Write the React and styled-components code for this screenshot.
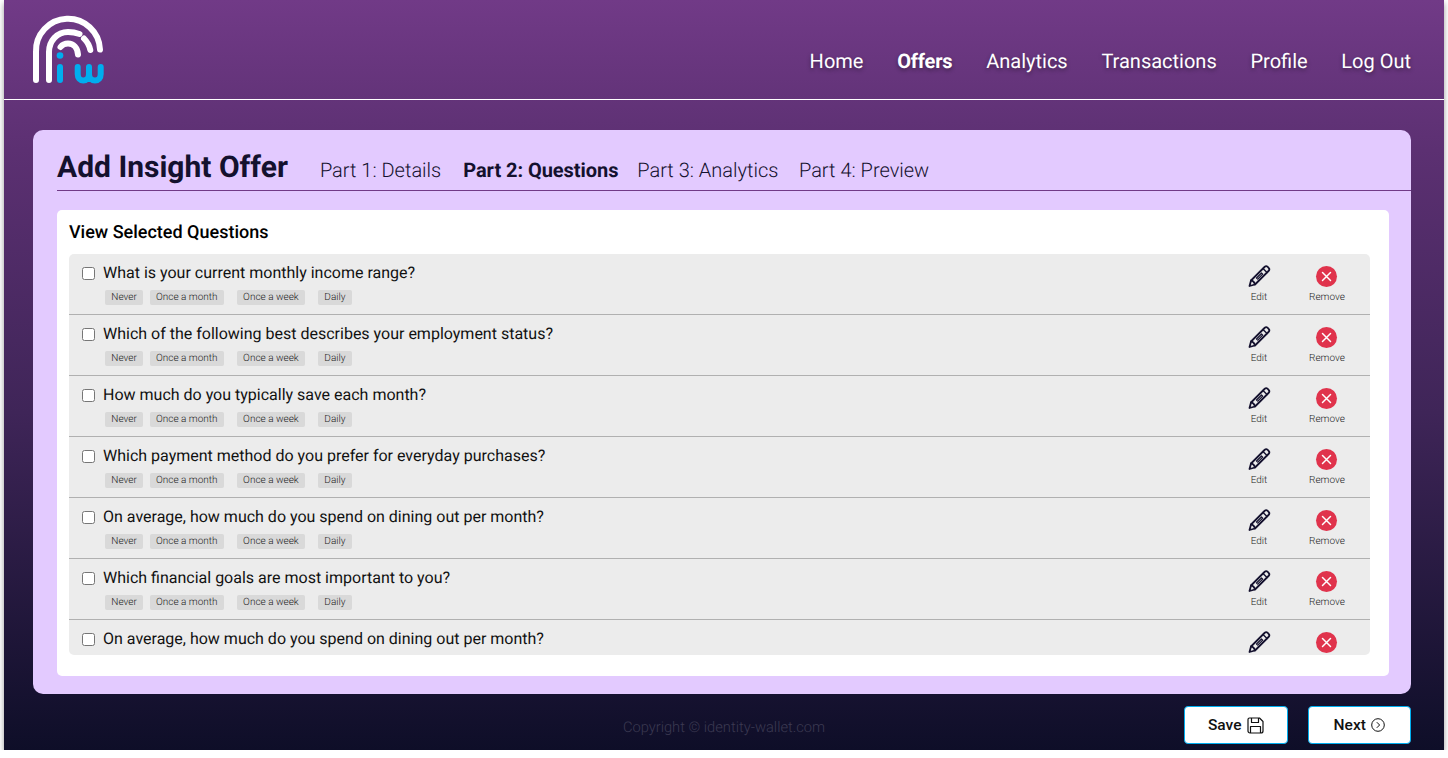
import React from "react";
import styled, { createGlobalStyle } from "styled-components";

const Global = createGlobalStyle`
  html, body { margin: 0; padding: 0; background: #fff; }
  body {
    font-family: Roboto, "Liberation Sans", sans-serif;
    text-rendering: geometricPrecision;
  }
  * { box-sizing: border-box; }
`;

const Frame = styled.div`
  margin-left: 4px;
  width: 1440px;
  height: 750px;
  display: flex;
  flex-direction: column;
  background: linear-gradient(180deg, #713a87 0%, #5c3072 20%, #3f2558 55%, #0e0e28 100%);
  box-shadow: 0 3px 6px rgba(0, 0, 0, 0.4);
  overflow: hidden;
`;

const Header = styled.header`
  height: 100px;
  flex: none;
  display: flex;
  align-items: flex-start;
  justify-content: space-between;
  padding: 14px 33px 0 26px;
  border-bottom: 1px solid #fff;
`;

const Logo = styled.svg`
  width: 80px;
  height: 72px;
  display: block;
`;

const Nav = styled.nav`
  display: flex;
  gap: 33.7px;
  margin-top: 35px;
`;

const NavLink = styled.a`
  font-size: 20px;
  line-height: 24px;
  color: #fff;
  font-weight: ${(p) => (p.$active ? 700 : 400)};
  letter-spacing: ${(p) => (p.$active ? "-0.15px" : "0")};
  text-shadow: 0 2px 4px rgba(0, 0, 0, 0.4);
`;

const Card = styled.main`
  margin: 30px 33px 0 29px;
  height: 564px;
  flex: none;
  background: #e3caff;
  border-radius: 10px;
  padding: 0 0 18px 24px;
  display: flex;
  flex-direction: column;
`;

const CardHead = styled.div`
  height: 61px;
  flex: none;
  display: flex;
  align-items: flex-end;
  border-bottom: 1px solid #713a87;
  color: #14112e;
`;

const Title = styled.h1`
  margin: 0 32px 4px 0;
  font-size: 30px;
  line-height: 36px;
  font-weight: 700;
  color: #14112e;
`;

const Step = styled.span`
  font-size: 20px;
  line-height: 24px;
  margin: 0 ${(p) => p.$gap}px 8px 0;
  font-weight: ${(p) => (p.$active ? 700 : 300)};
  letter-spacing: ${(p) => (p.$active ? "-0.05px" : "0")};
`;

const Panel = styled.section`
  flex: 1;
  min-height: 0;
  margin: 19px 22px 0 0;
  background: #fff;
  border-radius: 5px;
  padding: 12px 19px 21px 12px;
  display: flex;
  flex-direction: column;
`;

const PanelTitle = styled.h2`
  margin: 0 0 10px;
  font-size: 18px;
  line-height: 22px;
  font-weight: 500;
  color: #000;
`;

const List = styled.div`
  flex: 1;
  min-height: 0;
  overflow: hidden;
  background: #ececec;
  border-radius: 5px;
`;

const Row = styled.div`
  height: 61px;
  display: grid;
  grid-template-columns: 1fr 68px 68px;
  padding: 0 9px 0 13px;
  border-bottom: 1px solid #b0b0b0;
  &:last-child { border-bottom: none; }
`;

const QuestionCol = styled.div`
  padding-top: 9px;
`;

const QuestionLine = styled.label`
  display: flex;
  align-items: center;
  gap: 8px;
  font-size: 16px;
  line-height: 20px;
  color: #111;
`;

const Check = styled.input.attrs({ type: "checkbox" })`
  appearance: none;
  margin: 0;
  width: 13px;
  height: 13px;
  background: #fff;
  border: 1px solid #767676;
  border-radius: 2.5px;
`;

const Tags = styled.div`
  display: flex;
  gap: 13px;
  margin: 7px 0 0 23px;
`;

const Tag = styled.span`
  height: 15px;
  padding: 0 6.3px;
  background: #d9d9d9;
  border-radius: 2px;
  font-size: 10px;
  font-weight: 300;
  line-height: 15px;
  color: #222;
  &:first-child { margin-right: -6.4px; }
`;

const Action = styled.div`
  display: flex;
  flex-direction: column;
  align-items: center;
  padding-top: 10px;
`;

const ActionIcon = styled.div`
  height: 24px;
  display: flex;
  align-items: center;
  justify-content: center;
`;

const ActionLabel = styled.span`
  margin-top: 3px;
  font-size: 10px;
  font-weight: 300;
  line-height: 14px;
  color: #222;
`;

const RemoveBadge = styled.span`
  width: 21px;
  height: 21px;
  margin-right: 1px;
  border-radius: 50%;
  background: #e0334c;
  display: flex;
  align-items: center;
  justify-content: center;
`;

const Footer = styled.footer`
  flex: 1;
  display: grid;
  grid-template-columns: 1fr auto 1fr;
  align-items: start;
  padding: 12px 33px 0 29px;
`;

const Copyright = styled.span`
  grid-column: 2;
  margin: 11px 0 0 4px;
  font-size: 14.7px;
  line-height: 20px;
  font-weight: 300;
  color: #3c3a52;
`;

const Buttons = styled.div`
  justify-self: end;
  display: flex;
  gap: 20px;
`;

const Button = styled.button`
  width: 103.5px;
  height: 38px;
  padding: 0;
  display: flex;
  align-items: center;
  justify-content: center;
  gap: 5px;
  background: #fff;
  border: 1.5px solid #00aeef;
  border-radius: 4px;
  font-family: inherit;
  font-size: 15.5px;
  font-weight: 500;
  color: #111;
`;

const LogoMark = () => (
  <Logo viewBox="30 14 80 72" fill="none" strokeLinecap="round">
    <g stroke="#fff" strokeWidth="6">
      <path d="M36 80V52A32 32 0 0 1 100 49.500" />
      <path d="M49 80V52C49 41 57 32 68 32C72 32 76 32.700 79.500 34" />
      <path d="M84 38.500C87.500 42 89.500 46 90.300 50" />
      <path d="M60.500 47C62.500 44.500 65 43.500 68 43.500C73.500 43.500 77.500 48 78 54.500" />
    </g>
    <g stroke="#00aeef" strokeWidth="6">
      <path d="M60 67V80" />
      <path d="M77.700 67V74C77.700 78 80 80.500 83.300 80.500S89 78 89 74V67M89 74C89 78 91.500 80.500 95 80.500S100.700 78 100.700 74V67" />
    </g>
    <circle cx="60" cy="55.500" r="3.300" fill="#00aeef" />
  </Logo>
);

const PencilIcon = () => (
  <svg width="24" height="24" viewBox="0 0 24 24" fill="none" stroke="#14112e" strokeWidth="1.800" strokeLinejoin="round" strokeLinecap="round">
    <path d="M2.500 22 4 16.500 17.500 3c1-1 2.300-1 3.200-.1l.9.9c.9.900.9 2.200-.1 3.200L8 20.500Z" />
    <path d="M4 16.500c1 .1 2 .5 2.500 1.200.7.600 1.200 1.600 1.500 2.800" />
    <path d="M9.500 14 14.500 9 15.700 10.200 10.700 15.200Z" strokeWidth="1.200" />
    <path d="M16 4.500 20 8.500" strokeWidth="1.400" />
  </svg>
);

const CrossIcon = () => (
  <svg width="11" height="11" viewBox="0 0 11 11" stroke="#fff" strokeWidth="1.500" strokeLinecap="round">
    <path d="M1.500 1.500 9.500 9.500M9.500 1.500 1.500 9.500" />
  </svg>
);

const SaveIcon = () => (
  <svg width="17" height="17" viewBox="0 0 17 17" fill="none" stroke="#111" strokeWidth="1.200" strokeLinejoin="round">
    <path d="M2.500 1h10L16 4.500V14a2 2 0 0 1-2 2H3a2 2 0 0 1-2-2V2.500A1.500 1.500 0 0 1 2.500 1Z" />
    <path d="M4.500 1v4.500h7V1" />
    <path d="M3.500 16V9.500h10V16" />
  </svg>
);

const NextIcon = () => (
  <svg width="14" height="14" viewBox="0 0 14 14" fill="none" stroke="#111" strokeWidth="1">
    <circle cx="7" cy="7" r="6.300" />
    <path d="M5.800 4.200 8.600 7 5.800 9.800" />
  </svg>
);

const navItems = ["Home", "Offers", "Analytics", "Transactions", "Profile", "Log Out"];
const questions = [
  "What is your current monthly income range?",
  "Which of the following best describes your employment status?",
  "How much do you typically save each month?",
  "Which payment method do you prefer for everyday purchases?",
  "On average, how much do you spend on dining out per month?",
  "Which financial goals are most important to you?",
  "On average, how much do you spend on dining out per month?",
];
const answers = ["Never", "Once a month", "Once a week", "Daily"];

export default function App() {
  return (
    <>
      <Global />
      <Frame>
        <Header>
          <LogoMark />
          <Nav>
            {navItems.map((n) => (
              <NavLink key={n} $active={n === "Offers"}>{n}</NavLink>
            ))}
          </Nav>
        </Header>
        <Card>
          <CardHead>
            <Title>Add Insight Offer</Title>
            <Step $gap={22}>Part 1: Details</Step>
            <Step $gap={18.8} $active>Part 2: Questions</Step>
            <Step $gap={20.5}>Part 3: Analytics</Step>
            <Step $gap={0}>Part 4: Preview</Step>
          </CardHead>
          <Panel>
            <PanelTitle>View Selected Questions</PanelTitle>
            <List>
              {questions.map((q, i) => (
                <Row key={i}>
                  <QuestionCol>
                    <QuestionLine><Check />{q}</QuestionLine>
                    <Tags>
                      {answers.map((a) => <Tag key={a}>{a}</Tag>)}
                    </Tags>
                  </QuestionCol>
                  <Action>
                    <ActionIcon><PencilIcon /></ActionIcon>
                    <ActionLabel>Edit</ActionLabel>
                  </Action>
                  <Action>
                    <ActionIcon><RemoveBadge><CrossIcon /></RemoveBadge></ActionIcon>
                    <ActionLabel>Remove</ActionLabel>
                  </Action>
                </Row>
              ))}
            </List>
          </Panel>
        </Card>
        <Footer>
          <Copyright>Copyright © identity-wallet.com</Copyright>
          <Buttons>
            <Button>Save <SaveIcon /></Button>
            <Button>Next <NextIcon /></Button>
          </Buttons>
        </Footer>
      </Frame>
    </>
  );
}
